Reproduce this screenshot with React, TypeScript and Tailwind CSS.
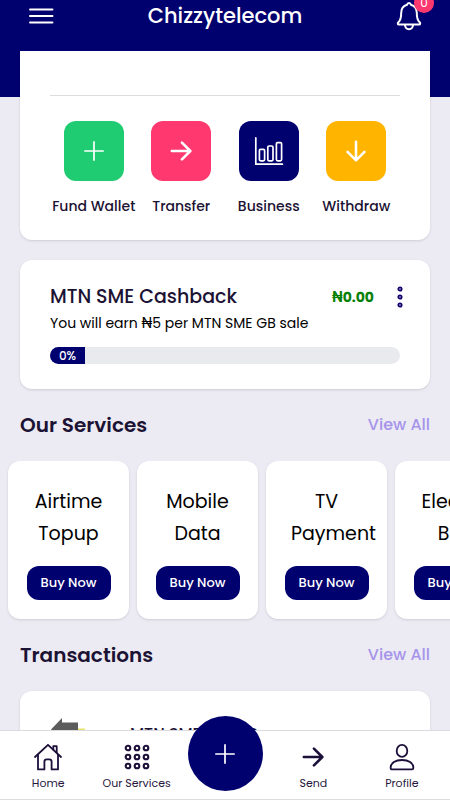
import React from 'react';

interface IconProps {
  className?: string;
}

interface Action {
  label: string;
  color: string;
  icon: React.ReactNode;
}

const MenuIcon: React.FC<IconProps> = ({ className }) => (
  <svg viewBox="0 0 26 18" className={className} fill="none" stroke="currentColor" strokeWidth="1.9" strokeLinecap="round">
    <path d="M2 2.500h22.500M2 9h22.500M2 15.500h22.500" />
  </svg>
);

const BellIcon: React.FC<IconProps> = ({ className }) => (
  <svg viewBox="0 0 26 30" className={className} fill="none" stroke="currentColor" strokeWidth="2" strokeLinecap="round" strokeLinejoin="round">
    <path d="M13 2c-1.100 0-1.700.7-1.900 1.700C7 4.800 5.200 7.700 5.200 11.700c0 5.800-1 8-2.800 9.600-.9.800-.8 2.300.6 2.300h20c1.400 0 1.500-1.500.6-2.300-1.800-1.600-2.800-3.800-2.800-9.600 0-4-1.800-6.900-5.900-8C14.700 2.700 14.100 2 13 2z" />
    <path d="M9 24c.2 2.600 1.800 4.200 4 4.200s3.800-1.600 4-4.200" />
  </svg>
);

const PlusIcon: React.FC<IconProps> = ({ className }) => (
  <svg viewBox="0 0 20 20" className={className} fill="none" stroke="currentColor" strokeWidth="1.7" strokeLinecap="round">
    <path d="M10 .9v18.200M.9 10h18.200" />
  </svg>
);

const ArrowRightIcon: React.FC<IconProps> = ({ className }) => (
  <svg viewBox="0 0 24 24" className={className} fill="none" stroke="currentColor" strokeWidth="2.8" strokeLinecap="round" strokeLinejoin="round">
    <path d="M2 12h20M13 2.800l9.200 9.200-9.200 9.200" />
  </svg>
);

const ArrowDownIcon: React.FC<IconProps> = ({ className }) => (
  <svg viewBox="0 0 24 24" className={className} fill="none" stroke="currentColor" strokeWidth="2.8" strokeLinecap="round" strokeLinejoin="round">
    <path d="M12 2v20M2.800 13l9.200 9.200 9.200-9.200" />
  </svg>
);

const ChartIcon: React.FC<IconProps> = ({ className }) => (
  <svg viewBox="0 0 30 30" className={className} fill="none" stroke="currentColor" strokeWidth="1.7" strokeLinecap="round" strokeLinejoin="round">
    <path d="M1.800 1.800v26.400h26.600" />
    <rect x="5.400" y="13.400" width="5.200" height="11.400" rx="1.200" />
    <rect x="13.800" y="10" width="5.200" height="14.800" rx="1.200" />
    <rect x="22.400" y="6.600" width="5.200" height="18.200" rx="1.200" />
  </svg>
);

const DotsIcon: React.FC<IconProps> = ({ className }) => (
  <svg viewBox="0 0 6 22" className={className} fill="none" stroke="currentColor" strokeWidth="1.9">
    <circle cx="3" cy="3" r="1.600" />
    <circle cx="3" cy="11" r="1.600" />
    <circle cx="3" cy="19" r="1.600" />
  </svg>
);

const HomeIcon: React.FC<IconProps> = ({ className }) => (
  <svg viewBox="0 0 28 28" className={className} fill="none" stroke="currentColor" strokeWidth="1.8" strokeLinecap="round" strokeLinejoin="round">
    <path d="M1 14L14 1.800 27 14" />
    <path d="M4 11.800v14.600h6.400v-7.600c0-1.500.9-2.400 2.200-2.400h2.800c1.300 0 2.200.9 2.200 2.400v7.600H24V11.800" />
    <path d="M19.300 6.400V3.200h3.400v6.200" />
  </svg>
);

const GridIcon: React.FC<IconProps> = ({ className }) => (
  <svg viewBox="0 0 26 26" className={className} fill="none" stroke="currentColor" strokeWidth="2.100">
    {[4, 13, 22].map((y) =>
      [4, 13, 22].map((x) => <circle key={`${x}-${y}`} cx={x} cy={y} r="2.300" />)
    )}
  </svg>
);

const ProfileIcon: React.FC<IconProps> = ({ className }) => (
  <svg viewBox="0 0 28 28" className={className} fill="none" stroke="currentColor" strokeWidth="1.8" strokeLinejoin="round">
    <ellipse cx="14" cy="7.900" rx="5.300" ry="6" />
    <path d="M2.600 24.800c0-4.800 5-7.800 11.400-7.800s11.400 3 11.400 7.800c0 1.200-.5 1.600-1.400 1.600H4c-.9 0-1.400-.4-1.400-1.600z" />
  </svg>
);

const actions: Action[] = [
  { label: 'Fund Wallet', color: 'bg-[#1fcc71]', icon: <PlusIcon className="size-5" /> },
  { label: 'Transfer', color: 'bg-[#ff396f]', icon: <ArrowRightIcon className="size-[22px]" /> },
  { label: 'Business', color: 'bg-[#00006e]', icon: <ChartIcon className="size-[30px]" /> },
  { label: 'Withdraw', color: 'bg-[#ffb400]', icon: <ArrowDownIcon className="size-[22px]" /> },
];

const services: string[] = ['Airtime Topup', 'Mobile Data', 'TV Payment', 'Electric Bills'];

const SectionHeading: React.FC<{ title: string }> = ({ title }) => (
  <div className="flex items-center justify-between px-5">
    <h2 className="text-xl leading-8 font-semibold text-[#1c1233]">{title}</h2>
    <a href="#" className="text-base font-medium text-[#a594ea]">View All</a>
  </div>
);

const NavItem: React.FC<{ label: string; icon: React.ReactNode }> = ({ label, icon }) => (
  <a href="#" className="flex flex-1 flex-col items-center pt-3 text-[#1c0f3a]">
    <span className="flex h-7 items-center">{icon}</span>
    <span className="mt-1 text-[11px] leading-4 whitespace-nowrap text-[#27173e]">{label}</span>
  </a>
);

const App: React.FC = () => {
  return (
    <div className="flex h-screen flex-col overflow-hidden bg-[#ecebf4] font-['Poppins','Inter',sans-serif]">
      <header className="h-[97px] shrink-0 bg-[#00006e] text-white">
        <div className="flex h-8 items-center justify-between px-7">
          <button aria-label="Menu">
            <MenuIcon className="h-[18px] w-[26px]" />
          </button>
          <h1 className="text-[21px] font-medium">Chizzytelecom</h1>
          <button aria-label="Notifications" className="relative">
            <BellIcon className="h-[30px] w-[26px]" />
            <span className="absolute -top-2 -right-3 flex size-5 items-center justify-center rounded-full bg-[#ff396f] text-xs">0</span>
          </button>
        </div>
      </header>

      <main className="-mt-[46px] min-h-0 flex-1 overflow-hidden">
        {/* Wallet actions */}
        <section className="mx-5 rounded-b-xl bg-white px-[30px] pt-11 pb-[22px] shadow-sm">
          <div className="grid grid-cols-4 border-t border-[#dcdce0] pt-[25px]">
            {actions.map((action) => (
              <button key={action.label} className="flex flex-col items-center">
                <span className={`flex size-[60px] items-center justify-center rounded-xl text-white ${action.color}`}>
                  {action.icon}
                </span>
                <span className="mt-[13px] text-sm leading-6 font-medium whitespace-nowrap text-[#1c1233]">{action.label}</span>
              </button>
            ))}
          </div>
        </section>

        {/* Cashback */}
        <section className="mx-5 mt-5 rounded-xl bg-white px-[30px] pt-[21px] pb-[25px] shadow-sm">
          <div className="flex items-center">
            <h3 className="flex-1 text-[19px] leading-8 font-medium text-[#1c1233]">MTN SME Cashback</h3>
            <span className="text-sm font-bold text-[#078007]">₦0.00</span>
            <button aria-label="More options" className="-mr-1 ml-[22px] p-px">
              <DotsIcon className="h-[22px] w-[6px] text-[#14006e]" />
            </button>
          </div>
          <p className="text-sm leading-5 text-black">You will earn ₦5 per MTN SME GB sale</p>
          <div className="mt-[14px] flex h-[17px] overflow-hidden rounded-full bg-[#e9eaee]">
            <div className="flex w-[10%] items-center justify-center bg-[#00006e] text-xs font-medium text-white">0%</div>
          </div>
        </section>

        <div className="mt-5">
          <SectionHeading title="Our Services" />
        </div>
        <div className="mt-5 flex gap-2 overflow-hidden pb-1 pl-2">
          {services.map((service) => (
            <div key={service} className="flex w-[121px] shrink-0 flex-col items-center rounded-xl bg-white pt-[25px] pb-[19px] shadow-sm">
              <p className="w-[71px] text-center text-[19px] leading-8 text-black">{service}</p>
              <button className="mt-4 h-[34px] w-[84px] rounded-xl bg-[#00006e] text-[13px] font-medium text-white">Buy Now</button>
            </div>
          ))}
        </div>

        <div className="mt-4">
          <SectionHeading title="Transactions" />
        </div>
        <section className="mx-5 mt-5 flex rounded-xl bg-white px-[30px] pt-6 pb-6 shadow-sm">
          <svg viewBox="0 0 50 36" className="h-9 w-[50px]">
            <path d="M19 13.500h16v10H19z" fill="#e9e36a" />
            <path d="M1 14.500L12 3v4.500h16v14H12v5z" fill="#5c5c5c" />
          </svg>
          <span className="ml-[30px] pt-[7px] text-base font-medium whitespace-nowrap text-[#1c1233]">MTN SME 1.00GB</span>
        </section>
      </main>

      <nav className="z-10 flex h-[70px] shrink-0 border-t border-b border-[#dcdce0] bg-white px-1">
        <NavItem label="Home" icon={<HomeIcon className="size-7" />} />
        <NavItem label="Our Services" icon={<GridIcon className="size-[26px]" />} />
        <div className="flex flex-1 justify-center">
          <button aria-label="Add" className="-mt-[15px] flex size-[75px] items-center justify-center rounded-full bg-[#00006e] text-white">
            <PlusIcon className="size-5" />
          </button>
        </div>
        <NavItem label="Send" icon={<ArrowRightIcon className="size-[22px]" />} />
        <NavItem label="Profile" icon={<ProfileIcon className="size-7" />} />
      </nav>
    </div>
  );
};

export default App;
